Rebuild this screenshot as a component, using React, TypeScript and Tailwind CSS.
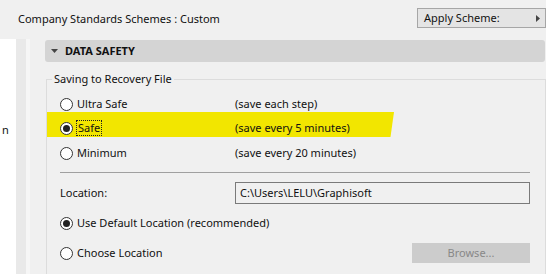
import React from "react";

const Radio = ({ checked = false }: { checked?: boolean }) => (
  <span className="w-[13px] h-[13px] shrink-0 rounded-full border border-[#333333] bg-white flex items-center justify-center">
    {checked && <span className="w-[7px] h-[7px] rounded-full bg-[#222222]" />}
  </span>
);

const App = () => {
  return (
    <div className="w-[546px] h-[274px] overflow-hidden bg-[#f0f0f0] flex flex-col font-['Noto_Sans',sans-serif] text-[11px] leading-[16px] text-[#111111]">
      {/* Top bar */}
      <div className="h-[39px] shrink-0 flex items-start">
        <span className="ml-[18px] mt-[11px]">Company Standards Schemes : Custom</span>
        <button className="ml-auto mt-[8px] w-[129px] h-[20px] border border-[#a6a6a6] bg-[#e4e4e4] flex items-center pl-[6px] pr-[5px] text-left">
          <span className="flex-1">Apply Scheme:</span>
          <svg width="4" height="7" viewBox="0 0 4 7">
            <path d="M0 0 L4 3.5 L0 7 Z" fill="#444444" />
          </svg>
        </button>
      </div>

      <div className="flex flex-1">
        {/* Left list panel (cut off) */}
        <div className="w-[16px] bg-white pt-[83px] pl-[2px] overflow-hidden">n</div>
        <div className="w-[10px] bg-[#e9e9e9]" />
        <div className="w-[4px] bg-[#f6f6f6]" />

        {/* Settings panel */}
        <div className="flex-1 pl-[15px] pt-[1px] flex flex-col">
          <div className="h-[22px] mr-[1px] rounded-[3px] bg-[#d4d4d4] flex items-center pl-[6px] gap-[7px]">
            <svg width="7" height="4" viewBox="0 0 7 4">
              <path d="M0 0 L7 0 L3.5 4 Z" fill="#444444" />
            </svg>
            <span className="font-bold">DATA SAFETY</span>
          </div>

          <div className="mt-[17px] ml-[1px] flex-1 border-l border-t border-r border-[#dcdcdc] flex flex-col">
            <span className="-mt-[9px] ml-[5px] px-[2px] w-fit bg-[#f0f0f0]">Saving to Recovery File</span>

            <div className="pl-[13px] pr-[15px] flex flex-col">
              <div className="mt-[5px] h-[24px] grid grid-cols-[175px_1fr] items-center">
                <span className="flex items-center gap-[4px]">
                  <Radio />
                  Ultra Safe
                </span>
                <span>(save each step)</span>
              </div>

              <div className="relative h-[24px] grid grid-cols-[175px_1fr] items-center">
                <span className="absolute left-[-13px] top-[-4px] w-[347px] h-[25px] bg-[#f2e600] [clip-path:polygon(0_0,100%_0,99%_100%,0_100%)]" />
                <span className="relative flex items-center gap-[3px]">
                  <Radio checked />
                  <span className="border border-dotted border-[#222222] px-[1px] h-[16px] flex items-center">Safe</span>
                </span>
                <span className="relative">(save every 5 minutes)</span>
              </div>

              <div className="mt-[1px] h-[24px] grid grid-cols-[175px_1fr] items-center">
                <span className="flex items-center gap-[4px]">
                  <Radio />
                  Minimum
                </span>
                <span>(save every 20 minutes)</span>
              </div>

              <div className="mt-[7px] h-px bg-[#a0a0a0]" />

              <div className="mt-[9px] h-[22px] grid grid-cols-[175px_1fr] items-center">
                <span>Location:</span>
                <div className="h-[22px] border border-[#7a7a7a] bg-[#f0f0f0] flex items-center pl-[4px]">
                  C:\Users\LELU\Graphisoft
                </div>
              </div>

              <div className="mt-[7px] h-[24px] flex items-center gap-[4px]">
                <Radio checked />
                Use Default Location (recommended)
              </div>

              <div className="mt-[6px] h-[24px] flex items-center gap-[4px]">
                <Radio />
                <span className="flex-1">Choose Location</span>
                <button className="w-[118px] h-[20px] bg-[#cccccc] text-[#888888] flex items-center justify-center">
                  Browse...
                </button>
              </div>
            </div>
          </div>
        </div>
      </div>
    </div>
  );
};

export default App;
